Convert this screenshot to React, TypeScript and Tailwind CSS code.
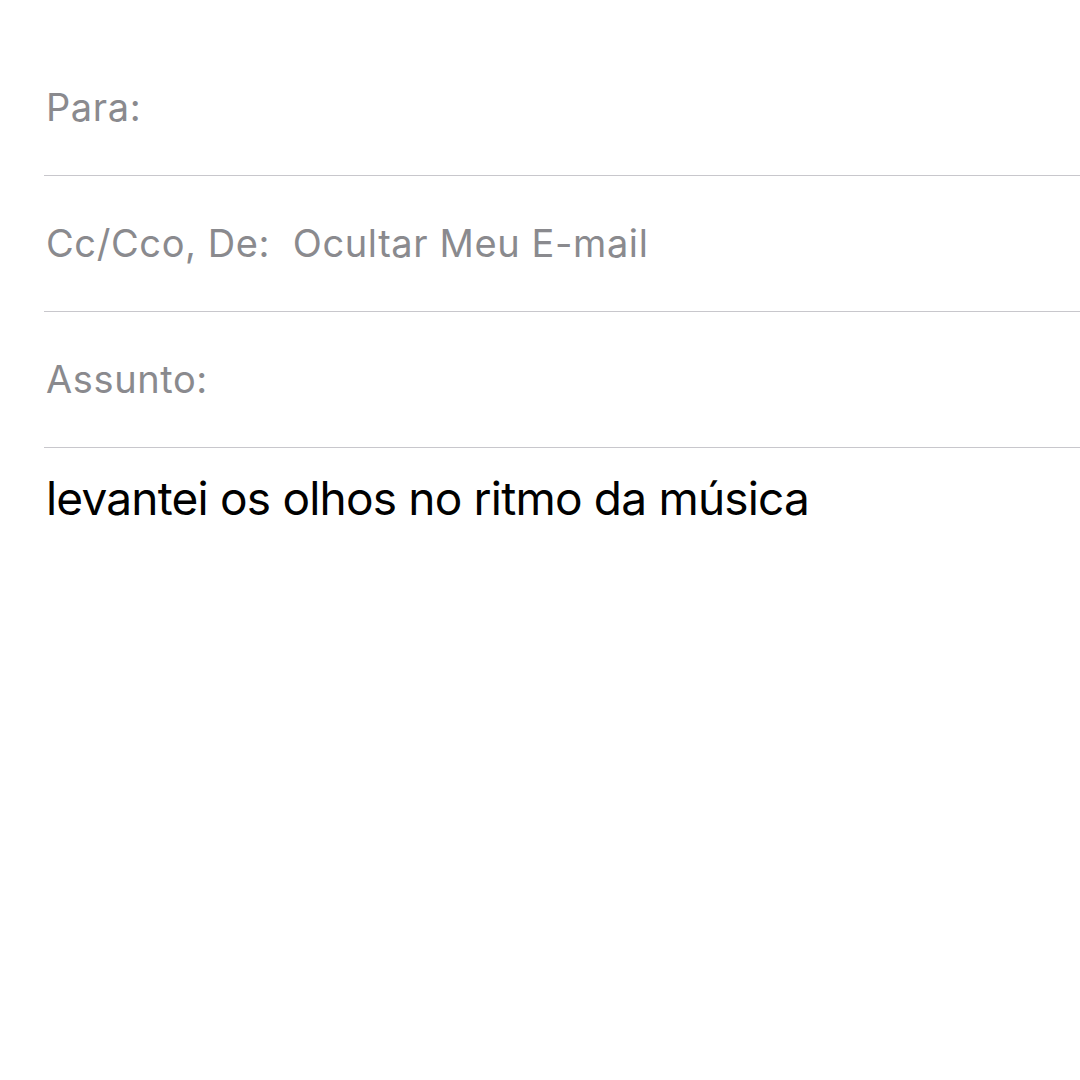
export default function App() {
  const font = { fontFamily: 'Inter, "Liberation Sans", sans-serif' };
  return (
    <div className="w-[1080px] h-[1080px] bg-white overflow-hidden" style={font}>
      <div className="pt-[40px] pl-[44px]">
        <div className="h-[136px] flex items-center border-b border-[#c8c7cc] pl-[2px]">
          <span className="text-[38px] text-[#8a8a8e] tracking-[0.6px]">Para:</span>
        </div>
        <div className="h-[136px] flex items-center border-b border-[#c8c7cc] pl-[2px]">
          <span className="text-[38px] text-[#8a8a8e] tracking-[0.6px] whitespace-pre">Cc/Cco, De:  Ocultar Meu E-mail</span>
        </div>
        <div className="h-[136px] flex items-center border-b border-[#c8c7cc] pl-[2px]">
          <span className="text-[38px] text-[#8a8a8e] tracking-[0.6px]">Assunto:</span>
        </div>
        <div className="pt-[22px] pl-[2px]">
          <span className="text-[46px] text-black leading-[56px] tracking-[-0.8px]">levantei os olhos no ritmo da música</span>
        </div>
      </div>
    </div>
  );
}
